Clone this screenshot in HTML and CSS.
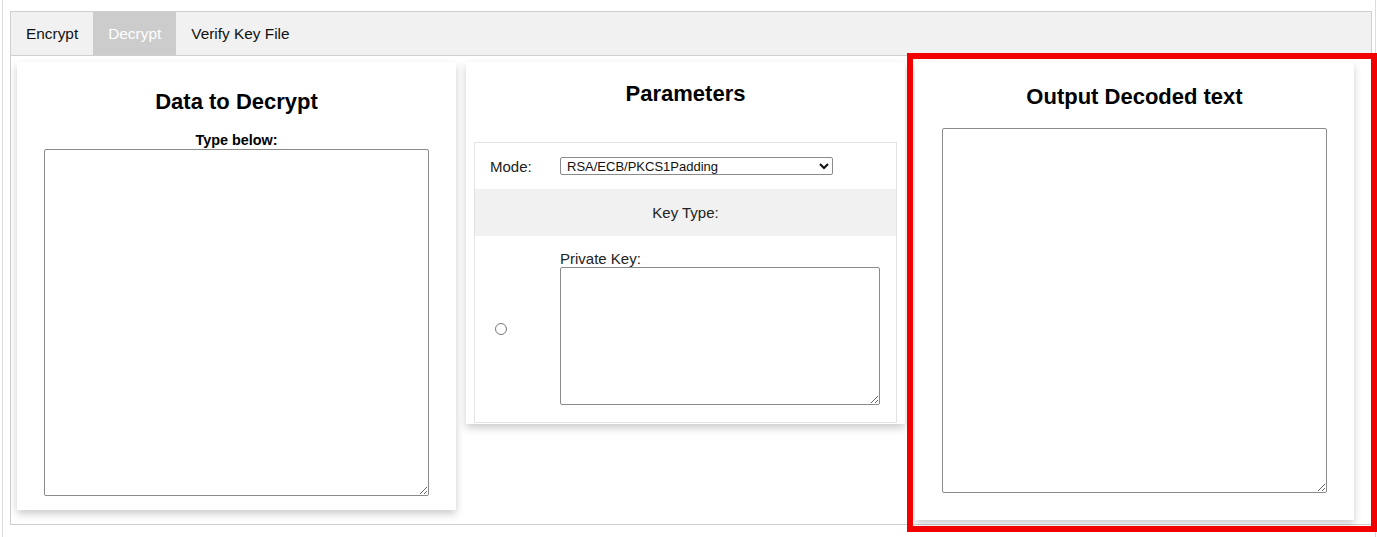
FILE: index.html
```html
<!DOCTYPE html>
<html lang="en">
<head>
<meta charset="utf-8">
<title>RSA Decrypt</title>
<link rel="stylesheet" href="styles.css">
</head>
<body>
<div class="frame">
  <div class="tool">
    <div class="tabs">
      <button class="tab">Encrypt</button>
      <button class="tab active">Decrypt</button>
      <button class="tab">Verify Key File</button>
    </div>
    <div class="tab-content">
      <section class="card card-input">
        <h2 class="card-title">Data to Decrypt</h2>
        <label class="type-label" for="inp">Type below:</label>
        <textarea id="inp" class="big-area area-input"></textarea>
      </section>
      <section class="card card-params">
        <h2 class="card-title">Parameters</h2>
        <div class="params">
          <div class="row row-mode">
            <div class="cell c1">Mode:</div>
            <div class="cell c2">
              <select class="mode-select">
                <option>RSA/ECB/PKCS1Padding</option>
              </select>
            </div>
          </div>
          <div class="row row-keytype">Key Type:</div>
          <div class="row row-key">
            <div class="cell c1 radio-cell"><input type="radio" name="kt"></div>
            <div class="cell c2 key-cell">
              <div class="key-label">Private Key:</div>
              <textarea class="key-area"></textarea>
            </div>
          </div>
        </div>
      </section>
      <section class="card card-output">
        <h2 class="card-title title-out">Output Decoded text</h2>
        <textarea class="big-area area-output"></textarea>
      </section>
    </div>
  </div>
</div>
<div class="highlight"></div>
</body>
</html>
```
FILE: styles.css
```css
html, body {
  margin: 0;
  padding: 0;
  background: #fff;
  overflow: hidden;
  font-family: "Liberation Sans", Arial, sans-serif;
  color: #000;
}

.frame {
  box-sizing: border-box;
  margin-left: 2px;
  width: 1374px;
  height: 537px;
  padding-top: 11px;
  border-left: 1px solid #dcdcdc;
  border-right: 1px solid #dcdcdc;
}

.tool {
  margin-left: 7px;
  width: 1362px;
}

.tabs {
  display: flex;
  height: 43px;
  border: 1px solid #cfcfcf;
  background: #f1f1f1;
}

.tab {
  border: none;
  background: transparent;
  margin: 0;
  padding: 0 15px;
  font-family: "Liberation Sans", Arial, sans-serif;
  font-size: 15.4px;
  color: #111;
  height: 43px;
}

.tab.active {
  background: #cccccc;
  color: #fff;
}

.tab-content {
  box-sizing: border-box;
  display: flex;
  align-items: flex-start;
  gap: 10px;
  height: 469px;
  padding: 6px 12px 4px 6px;
  border: 1px solid #cfcfcf;
  border-top: none;
}

.card {
  flex: none;
  box-sizing: border-box;
  width: 439px;
  background: #fff;
  box-shadow: 0 4px 8px 0 rgba(0, 0, 0, 0.2);
}

.card-title {
  margin: 0;
  font-size: 22px;
  line-height: 25px;
  font-weight: bold;
  text-align: center;
}

.card-input {
  height: 448px;
  padding-top: 27px;
}

.type-label {
  display: block;
  margin-top: 18px;
  font-size: 14.4px;
  line-height: 16px;
  font-weight: bold;
  text-align: center;
}

.big-area {
  display: block;
  box-sizing: border-box;
  margin: 0 auto;
  border: 1px solid #8a8a8a;
  border-radius: 2px;
  background: #fff;
  padding: 2px;
}

.area-input {
  margin-top: 1px;
  width: 385px;
  height: 347px;
}

.card-params {
  height: 362px;
  padding-top: 19px;
}

.params {
  box-sizing: border-box;
  margin: 36px 8px 0 8px;
  height: 281px;
  border: 1px solid #e3e3e3;
  font-size: 15px;
  color: #222;
}

.row {
  display: flex;
}

.cell.c1 {
  box-sizing: border-box;
  width: 70px;
  padding-left: 15px;
}

.cell.c2 {
  padding-left: 15px;
}

.row-mode {
  height: 46px;
  align-items: center;
}

.mode-select {
  box-sizing: border-box;
  width: 273px;
  height: 18px;
  font-family: "Liberation Sans", Arial, sans-serif;
  font-size: 13px;
  color: #111;
  border: 1px solid #8a8a8a;
  border-radius: 2px;
  background: #fff;
  padding: 0 2px;
}

.row-keytype {
  height: 47px;
  align-items: center;
  justify-content: center;
  background: #f1f1f1;
}

.row-key {
  height: 186px;
}

.radio-cell {
  display: flex;
  align-items: center;
  padding-left: 15px;
}

.radio-cell input {
  margin: 0 0 0 5px;
  width: 12px;
  height: 12px;
}

.key-cell {
  padding-top: 14px;
}

.key-label {
  line-height: 17px;
}

.key-area {
  display: block;
  box-sizing: border-box;
  width: 320px;
  height: 138px;
  border: 1px solid #8a8a8a;
  border-radius: 2px;
  background: #fff;
}

.card-output {
  height: 458px;
  padding-top: 22px;
}

.title-out {
  font-size: 22px;
  line-height: 25px;
}

.area-output {
  margin-top: 19px;
  width: 385px;
  height: 365px;
}

.highlight {
  position: absolute;
  left: 907px;
  top: 53px;
  width: 470px;
  height: 479px;
  box-sizing: border-box;
  border: 6px solid #f20000;
  pointer-events: none;
}
```
